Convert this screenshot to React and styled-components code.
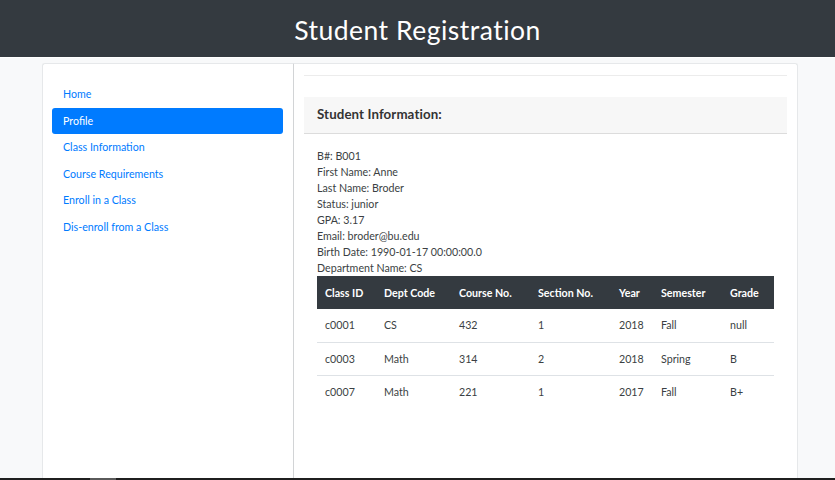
import React from "react";
import styled, { createGlobalStyle } from "styled-components";

const Global = createGlobalStyle`
  html, body { margin: 0; padding: 0; }
  body {
    font-family: "Lato", "Noto Sans", sans-serif;
    font-size: 10.67px;
    line-height: 16px;
    color: #212529;
    background: #f8f9fa;
    overflow: hidden;
  }
  * { box-sizing: border-box; }
`;

const Page = styled.div`
  height: 480px;
  display: flex;
  flex-direction: column;
  background: #f8f9fa;
`;

const Header = styled.header`
  height: 58px;
  flex: none;
  background: #343a40;
  display: flex;
  align-items: center;
  justify-content: center;
  border-bottom: 1px solid #ffffff;
`;

const Title = styled.h1`
  margin: 0;
  color: #fff;
  font-family: "Lato", sans-serif;
  font-weight: 400;
  font-size: 26.5px;
  letter-spacing: 0.5px;
  padding-top: 2px;
`;

const Main = styled.main`
  flex: 1;
  min-height: 0;
  overflow: hidden;
  display: flex;
  padding: 5px 0 0 42px;
`;

const SideCard = styled.aside`
  width: 252px;
  flex: none;
  background: #fff;
  border: 1px solid #e6e8ea;
  border-right-color: #d2d4d6;
  border-bottom: none;
  border-radius: 3px 0 0 0;
  padding: 17px 10px 0 9px;
`;

const Nav = styled.nav`
  display: flex;
  flex-direction: column;
`;

const NavLink = styled.a`
  display: block;
  height: 26.5px;
  line-height: 26.5px;
  padding: 0 11px;
  color: ${(p) => (p.$active ? "#fff" : "#007bff")};
  background: ${(p) => (p.$active ? "#007bff" : "transparent")};
  border-radius: 3px;
  text-decoration: none;
  font-size: 10.67px;
`;

const ContentCard = styled.section`
  width: 504px;
  flex: none;
  background: #fff;
  border: 1px solid #e6e8ea;
  border-left: none;
  border-bottom: none;
  border-radius: 0 3px 0 0;
  padding: 11px 10px 0 10px;
`;

const Rule = styled.hr`
  margin: 0 0 21px 0;
  border: none;
  border-top: 1px solid #ececec;
`;

const PanelHeader = styled.div`
  height: 37px;
  background: #f7f7f7;
  border-bottom: 1px solid #dcdcdc;
  display: flex;
  align-items: center;
  padding: 0 13px 2px 13px;
  font-size: 13.3px;
  font-weight: 700;
  color: #333;
  letter-spacing: 0.1px;
`;

const PanelBody = styled.div`
  padding: 14px 13px 0 13px;
`;

const InfoLine = styled.div`
  height: 16px;
  line-height: 16px;
  color: #3b3f43;
`;

const Table = styled.table`
  width: 457px;
  border-collapse: collapse;
  table-layout: fixed;
`;

const Th = styled.th`
  background: #343a40;
  color: #fff;
  font-weight: 700;
  text-align: left;
  height: 33px;
  padding: 0 8px;
`;

const Td = styled.td`
  height: 33px;
  padding: 0 8px;
  border-top: ${(p) => (p.$first ? "none" : "1px solid #dee2e6")};
  color: #3b3f43;
`;

const BottomBar = styled.div`
  height: 2px;
  flex: none;
  background: #1f1f1f;
  display: flex;
  padding-left: 90px;
`;

const ScrollThumb = styled.div`
  width: 26px;
  background: #5a5a5a;
`;

const navItems = [
  "Home",
  "Profile",
  "Class Information",
  "Course Requirements",
  "Enroll in a Class",
  "Dis-enroll from a Class",
];

const info = [
  "B#: B001",
  "First Name: Anne",
  "Last Name: Broder",
  "Status: junior",
  "GPA: 3.17",
  "Email: broder@bu.edu",
  "Birth Date: 1990-01-17 00:00:00.0",
  "Department Name: CS",
];

const cols = [
  ["Class ID", 59],
  ["Dept Code", 75],
  ["Course No.", 79],
  ["Section No.", 81],
  ["Year", 42],
  ["Semester", 69],
  ["Grade", 52],
];

const rows = [
  ["c0001", "CS", "432", "1", "2018", "Fall", "null"],
  ["c0003", "Math", "314", "2", "2018", "Spring", "B"],
  ["c0007", "Math", "221", "1", "2017", "Fall", "B+"],
];

export default function App() {
  return (
    <Page>
      <Global />
      <Header>
        <Title>Student Registration</Title>
      </Header>
      <Main>
        <SideCard>
          <Nav>
            {navItems.map((n) => (
              <NavLink key={n} href="#" $active={n === "Profile"}>
                {n}
              </NavLink>
            ))}
          </Nav>
        </SideCard>
        <ContentCard>
          <Rule />
          <PanelHeader>Student Information:</PanelHeader>
          <PanelBody>
            {info.map((l) => (
              <InfoLine key={l}>{l}</InfoLine>
            ))}
            <Table>
              <colgroup>
                {cols.map(([c, w]) => (
                  <col key={c} style={{ width: w }} />
                ))}
              </colgroup>
              <thead>
                <tr>
                  {cols.map(([c]) => (
                    <Th key={c}>{c}</Th>
                  ))}
                </tr>
              </thead>
              <tbody>
                {rows.map((r, i) => (
                  <tr key={i}>
                    {r.map((v, j) => (
                      <Td key={j} $first={i === 0}>
                        {v}
                      </Td>
                    ))}
                  </tr>
                ))}
              </tbody>
            </Table>
          </PanelBody>
        </ContentCard>
      </Main>
      <BottomBar>
        <ScrollThumb />
      </BottomBar>
    </Page>
  );
}
